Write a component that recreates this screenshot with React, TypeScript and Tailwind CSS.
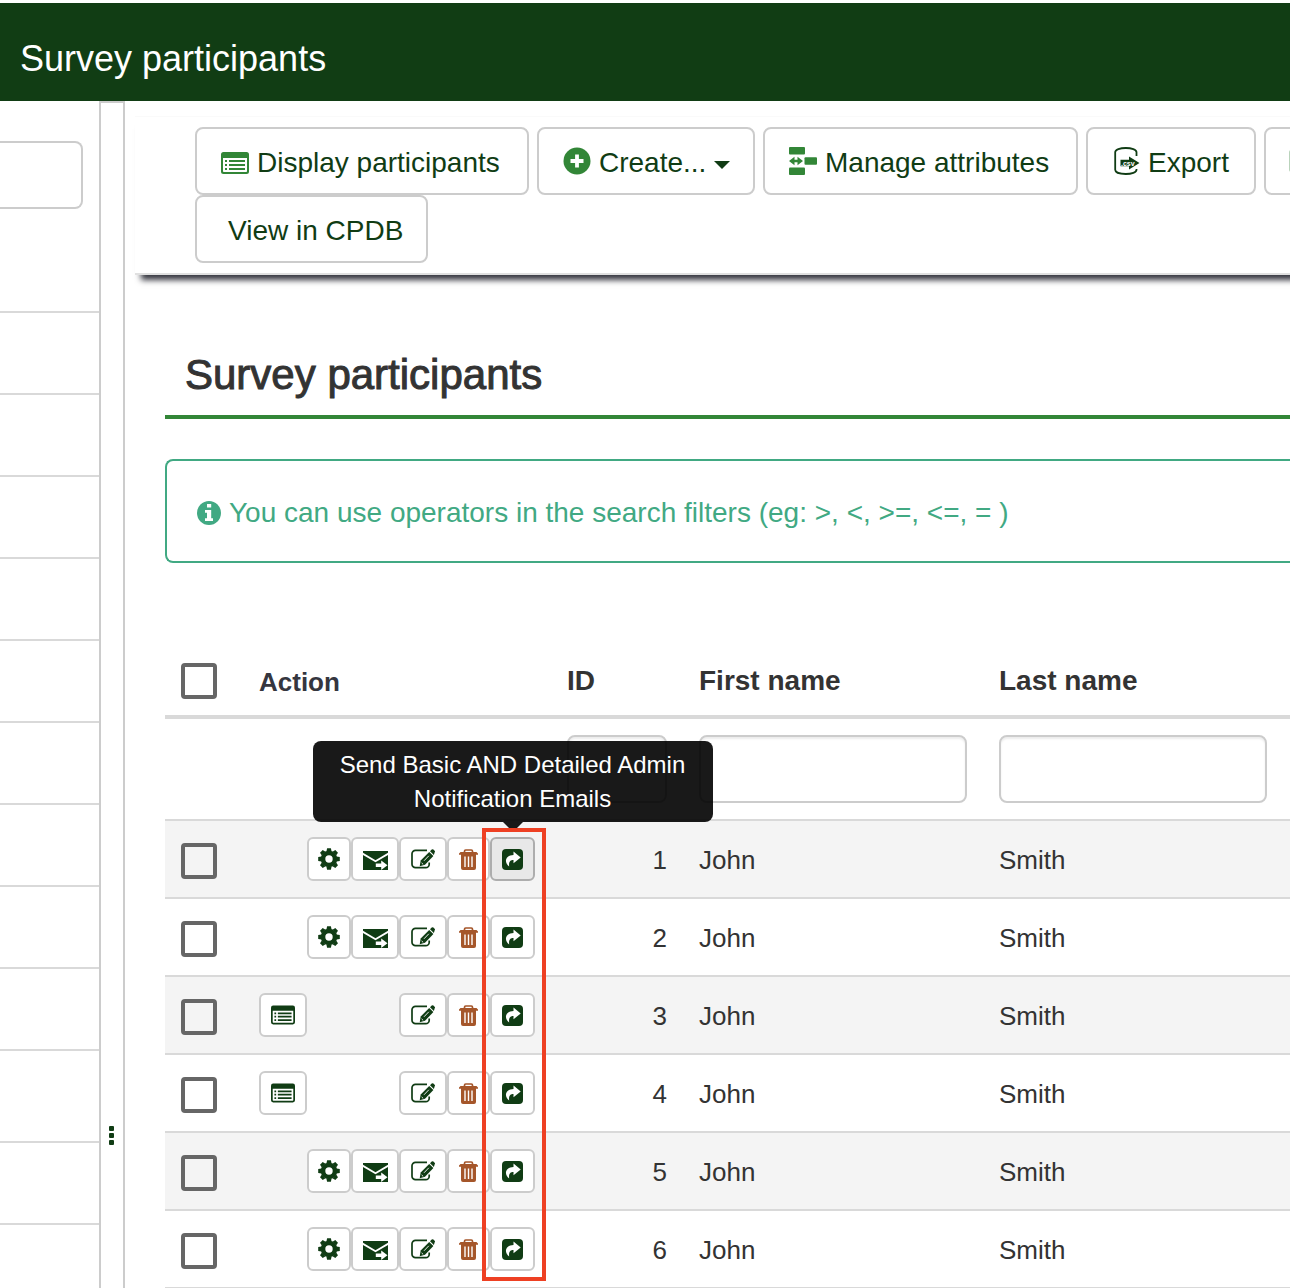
import React from "react";

type IconProps = { className?: string };

function ListIcon({ className }: IconProps) {
  return (
    <svg viewBox="0 0 28 22" className={className} fill="currentColor" aria-hidden="true">
      <path
        fillRule="evenodd"
        d="M2.5 0h23A2.5 2.5 0 0 1 28 2.5v17a2.500 2.500 0 0 1-2.500 2.500h-23A2.500 2.500 0 0 1 0 19.500v-17A2.500 2.500 0 0 1 2.500 0zM2 6v13.200a.8.8 0 0 0 .8.8h22.400a.8.8 0 0 0 .8-.8V6z"
      />
      <path d="M4 8h2v2H4zM8 8h16v2H8zM4 12h2v2H4zM8 12h16v2H8zM4 16h2v2H4zM8 16h16v2H8z" />
    </svg>
  );
}

function PlusCircleIcon({ className }: IconProps) {
  return (
    <svg viewBox="0 0 28 28" className={className} aria-hidden="true">
      <circle cx="14" cy="14" r="13.500" fill="currentColor" />
      <path d="M14 7.500v13M7.500 14h13" stroke="#fff" strokeWidth="3.800" />
    </svg>
  );
}

function AttributesIcon({ className }: IconProps) {
  return (
    <svg viewBox="0 0 28 28" className={className} fill="currentColor" aria-hidden="true">
      <rect x="0" y="0" width="16" height="7.500" rx="1" />
      <rect x="0" y="20.500" width="16" height="7.500" rx="1" />
      <rect x="15.500" y="10.300" width="12.500" height="7.500" rx="1" />
      <path d="M0 14l5.500-4.200v2.900h3V9.800L14 14l-5.500 4.200v-2.900h-3v2.900z" />
    </svg>
  );
}

function ExportIcon({ className }: IconProps) {
  return (
    <svg viewBox="0 0 26 28" className={className} aria-hidden="true">
      <path
        d="M22.500 9V5.300C22.500 2.600 17.500 1 11.800 1S1.200 2.600 1.200 5.300v17.400C1.200 25.400 6 27 11.800 27s10.700-1.600 10.700-4.300V22"
        fill="none"
        stroke="currentColor"
        strokeWidth="1.800"
      />
      <path d="M6.500 12.800h8.500V9.500L25.500 16 15 22.500v-3.300H6.500z" fill="currentColor" />
      <text x="7" y="18.700" fontSize="7" fontWeight="700" fill="#fff">
        .csv
      </text>
    </svg>
  );
}

function InfoIcon({ className }: IconProps) {
  return (
    <svg viewBox="0 0 24 24" className={className} aria-hidden="true">
      <circle cx="12" cy="12" r="12" fill="currentColor" />
      <path d="M10 3h4.200v3.600H10zM8 9h6.200v8.300H16V20H8v-2.700h2V11.700H8z" fill="#fff" />
    </svg>
  );
}

function GearIcon({ className }: IconProps) {
  return (
    <svg viewBox="-11 -11 22 22" className={className} aria-hidden="true">
      <circle r="6" fill="none" stroke="currentColor" strokeWidth="4.600" />
      {[0, 45, 90, 135, 180, 225, 270, 315].map((a) => (
        <path key={a} d="M-2.600-7.500L-1.900-10.800H1.900L2.600-7.500z" transform={`rotate(${a})`} fill="currentColor" />
      ))}
    </svg>
  );
}

function MailIcon({ className }: IconProps) {
  return (
    <svg viewBox="0 0 25 19" className={className} aria-hidden="true">
      <path d="M0 0h25v19H0z" fill="currentColor" />
      <path d="M-1 2.200l13.500 8L26 2.200" fill="none" stroke="#fff" strokeWidth="1.900" />
      <path d="M12.800 12.400h5.400V9.500l6.300 4.800-6.300 4.700v-2.900h-5.400z" fill="#fff" />
    </svg>
  );
}

function EditIcon({ className }: IconProps) {
  return (
    <svg viewBox="0 0 24 20" className={className} aria-hidden="true">
      <path
        d="M16 1.300H4.500A3.500 3.500 0 0 0 1 4.800v10.400a3.500 3.500 0 0 0 3.500 3.500h10.200a3.500 3.500 0 0 0 3.500-3.500V13.500"
        fill="none"
        stroke="currentColor"
        strokeWidth="1.700"
      />
      <path d="M8.700 17.200l1-5.600 8.500-8.700 4.200 4-8.400 8.900z" fill="currentColor" />
      <path d="M19 2.300L20.700.6a1.200 1.200 0 0 1 1.700 0l1.200 1.200a1.200 1.200 0 0 1 0 1.700L22.900 6z" fill="currentColor" />
      <path d="M13 11.800l4.800-5M10.600 13.900l1.600 1.500" stroke="#fff" strokeWidth="0.900" />
    </svg>
  );
}

function TrashIcon({ className }: IconProps) {
  return (
    <svg viewBox="0 0 19 21" className={className} aria-hidden="true">
      <path d="M5.500 3.500V2.200A1.200 1.200 0 0 1 6.700 1h5.600a1.200 1.200 0 0 1 1.200 1.200v1.300" fill="none" stroke="currentColor" strokeWidth="1.700" />
      <path d="M1.500 3h16L19 4.500v1.300H0V4.500zM2 5.500h15V19a2 2 0 0 1-2 2H4a2 2 0 0 1-2-2z" fill="currentColor" />
      <path d="M6 7.500v10.500M9.500 7.500v10.500M13 7.500v10.500" stroke="#fff" strokeWidth="1.400" />
    </svg>
  );
}

function ShareIcon({ className }: IconProps) {
  return (
    <svg viewBox="0 0 21 21" className={className} aria-hidden="true">
      <rect width="21" height="21" rx="4" fill="currentColor" />
      <path
        d="M11.500 2.500L18.700 8.500l-7.200 5.800V11c-3.200 0-5 1.700-4.300 6.600C1.800 13.500 3 6.200 11.500 5.900z"
        fill="#fff"
      />
    </svg>
  );
}

function ToolButton({ className, children }: { className: string; children: React.ReactNode }) {
  return (
    <button
      type="button"
      className={`flex h-17 shrink-0 items-center gap-2 rounded-lg border-2 border-[#ccc] bg-white pt-[3px] pl-6 whitespace-nowrap text-[#103c14] ${className}`}
    >
      {children}
    </button>
  );
}

function ActionButton({ label, className, children }: { label: string; className: string; children: React.ReactNode }) {
  return (
    <button
      type="button"
      aria-label={label}
      className={`flex h-11 items-center justify-center rounded-md border-2 text-[#103c14] ${className}`}
    >
      {children}
    </button>
  );
}

const plain = "border-[#ccc] bg-white";

function Actions({ responded, active }: { responded: boolean; active: boolean }) {
  return (
    <div className="grid grid-cols-[48px_44px_48px_48px_43px_45px]">
      {responded ? (
        <>
          <ActionButton label="View response" className={plain}>
            <ListIcon className="h-5 w-6" />
          </ActionButton>
          <span className="col-span-2" />
        </>
      ) : (
        <>
          <span />
          <ActionButton label="Launch survey" className={plain}>
            <GearIcon className="size-[22px]" />
          </ActionButton>
          <ActionButton label="Send invitation" className={plain}>
            <MailIcon className="mt-0.5 w-[25px]" />
          </ActionButton>
        </>
      )}
      <ActionButton label="Edit participant" className={plain}>
        <EditIcon className="w-6" />
      </ActionButton>
      <ActionButton label="Delete participant" className={plain}>
        <TrashIcon className="w-[19px] text-[#a5562a]" />
      </ActionButton>
      <div className="relative">
        <ActionButton
          label="Send Basic AND Detailed Admin Notification Emails"
          className={active ? "w-full border-[#adadad] bg-[#e8e8e8]" : "w-full border-[#ccc] bg-white"}
        >
          <ShareIcon className="size-[21px]" />
        </ActionButton>
        {active && (
          <div
            role="tooltip"
            className="absolute bottom-full left-1/2 mb-[15px] w-[400px] -translate-x-1/2 rounded-lg bg-black/90 px-4 pt-[7px] pb-1.5 text-center text-2xl leading-[34px] text-white"
          >
            Send Basic AND Detailed Admin Notification Emails
            <span className="absolute top-full left-1/2 -translate-x-1/2 border-x-10 border-t-10 border-x-transparent border-t-black/90" />
          </div>
        )}
      </div>
    </div>
  );
}

const rows = [
  { id: 1, first: "John", last: "Smith", responded: false },
  { id: 2, first: "John", last: "Smith", responded: false },
  { id: 3, first: "John", last: "Smith", responded: true },
  { id: 4, first: "John", last: "Smith", responded: true },
  { id: 5, first: "John", last: "Smith", responded: false },
  { id: 6, first: "John", last: "Smith", responded: false },
];

const checkbox = "block size-9 appearance-none rounded-sm border-4 border-[#666] checked:bg-[#666]";
const filter = "block h-17 w-full rounded-lg border-2 border-[#ccc] bg-white px-4 shadow-[inset_0_2px_2px_rgba(0,0,0,0.075)]";

function Sidebar() {
  return (
    <aside className="w-[99px] shrink-0">
      <div className="h-[212px] border-b-2 border-[#d9d9d9] pt-10 pr-4">
        <input aria-label="Search menu" className="block h-17 w-full rounded-r-lg border-2 border-l-0 border-[#ccc]" />
      </div>
      {Array.from({ length: 9 }, (_, i) => (
        <div key={i} className="h-[82px] border-b-2 border-[#d9d9d9]" />
      ))}
      <div className="h-[92px] border-b-2 border-[#d9d9d9]" />
      <div className="h-[82px] border-b-2 border-[#d9d9d9]" />
    </aside>
  );
}

export default function App() {
  return (
    <div className="flex h-screen flex-col overflow-hidden bg-white pt-[3px] font-['Liberation_Sans',Arial,sans-serif] text-[28px] leading-10 text-[#333]">
      <header className="flex h-[98px] shrink-0 items-center bg-[#113d14] px-5 pt-3.5 text-4xl text-white">Survey participants</header>

      <div className="flex min-h-0 flex-1">
        <Sidebar />

        <div className="w-[26px] shrink-0 border-2 border-b-0 border-[#ccc] pt-[1023px]">
          <div className="flex w-5 flex-col items-center gap-0.5">
            <span className="size-[5px] rounded-[1px] bg-[#103c14]" />
            <span className="size-[5px] rounded-[1px] bg-[#103c14]" />
            <span className="size-[5px] rounded-[1px] bg-[#103c14]" />
          </div>
        </div>

        <main className="min-w-0 flex-1 overflow-hidden">
          <div className="mt-[15px] -mr-5 ml-2.5 border-t border-b-2 border-t-[#fafafa] border-b-[#e0e0e0] bg-white pt-2.5 pb-2.5 pl-15 shadow-[2px_9px_6px_-4px_#35363f]">
            <div className="flex gap-2">
              <ToolButton className="w-[334px]">
                <ListIcon className="w-7 text-[#328637]" />
                Display participants
              </ToolButton>
              <ToolButton className="w-[218px]">
                <PlusCircleIcon className="mb-1 w-7 text-[#328637]" />
                Create...
                <span className="mt-1 border-x-8 border-t-8 border-x-transparent border-t-[#103c14]" />
              </ToolButton>
              <ToolButton className="w-[315px]">
                <AttributesIcon className="mb-1 w-7 text-[#328637]" />
                Manage attributes
              </ToolButton>
              <ToolButton className="w-[170px]">
                <span className="flex w-7 justify-end">
                  <ExportIcon className="mb-1 w-[26px]" />
                </span>
                Export
              </ToolButton>
              <button
                type="button"
                aria-label="Invitations"
                className="flex h-17 w-40 shrink-0 items-center rounded-lg border-2 border-[#ccc] bg-white px-[23px] text-[#b9d3bb]"
              >
                <ListIcon className="w-7" />
              </button>
            </div>
            <div className="flex">
              <ToolButton className="w-[233px]">
                <span className="pl-[7px]">View in CPDB</span>
              </ToolButton>
            </div>
          </div>

          <div className="pt-[74px] pl-10">
            <h1 className="border-b-4 border-[#328637] px-5 pb-[15px] text-[42px] leading-[51px] [-webkit-text-stroke:1px_#333]">
              Survey participants
            </h1>

            <div className="mt-10 flex h-[104px] items-center gap-2 rounded-l-lg border-2 border-r-0 border-[#41a983] pt-[3px] pl-[30px] whitespace-nowrap text-[#41a983]">
              <InfoIcon className="w-6 shrink-0" />
              <p>You can use operators in the search filters (eg: &gt;, &lt;, &gt;=, &lt;=, = )</p>
            </div>

            <div className="relative mt-[82px]">
              <table className="w-full table-fixed border-separate border-spacing-0 text-left">
                <colgroup>
                  <col className="w-[78px]" />
                  <col className="w-[308px]" />
                  <col className="w-[132px]" />
                  <col className="w-[300px]" />
                  <col className="w-[300px]" />
                  <col />
                </colgroup>
                <thead>
                  <tr className="h-[74px] *:border-b-4 *:border-[#d9d9d9] *:px-4">
                    <th className="pt-0.5">
                      <input type="checkbox" aria-label="Select all" className={checkbox} />
                    </th>
                    <th className="pt-1 text-[26px] text-[#35363f]">Action</th>
                    <th className="pt-0.5">ID</th>
                    <th className="pt-0.5">First name</th>
                    <th className="pt-0.5">Last name</th>
                    <td className="px-0!" />
                  </tr>
                  <tr className="*:border-b-2 *:border-[#d9d9d9] *:p-4">
                    <td />
                    <td />
                    <td>
                      <input aria-label="Filter by ID" className={filter} />
                    </td>
                    <td>
                      <input aria-label="Filter by first name" className={filter} />
                    </td>
                    <td>
                      <input aria-label="Filter by last name" className={filter} />
                    </td>
                    <td className="px-0!" />
                  </tr>
                </thead>
                <tbody className="text-[26px]">
                  {rows.map((row) => (
                    <tr key={row.id} className="odd:bg-[#f4f4f4] *:h-[78px] *:border-b-2 *:border-[#d9d9d9] *:px-4">
                      <td className="pt-1">
                        <input type="checkbox" aria-label={`Select participant ${row.id}`} className={checkbox} />
                      </td>
                      <td>
                        <Actions responded={row.responded} active={row.id === 1} />
                      </td>
                      <td className="pt-0.5 text-right">{row.id}</td>
                      <td className="pt-0.5">{row.first}</td>
                      <td className="pt-0.5">{row.last}</td>
                      <td className="px-0!" />
                    </tr>
                  ))}
                </tbody>
              </table>
              <div className="pointer-events-none absolute top-[183px] bottom-2 left-[317px] w-16 border-4 border-[#ee4023]" />
            </div>
          </div>
        </main>
      </div>
    </div>
  );
}
